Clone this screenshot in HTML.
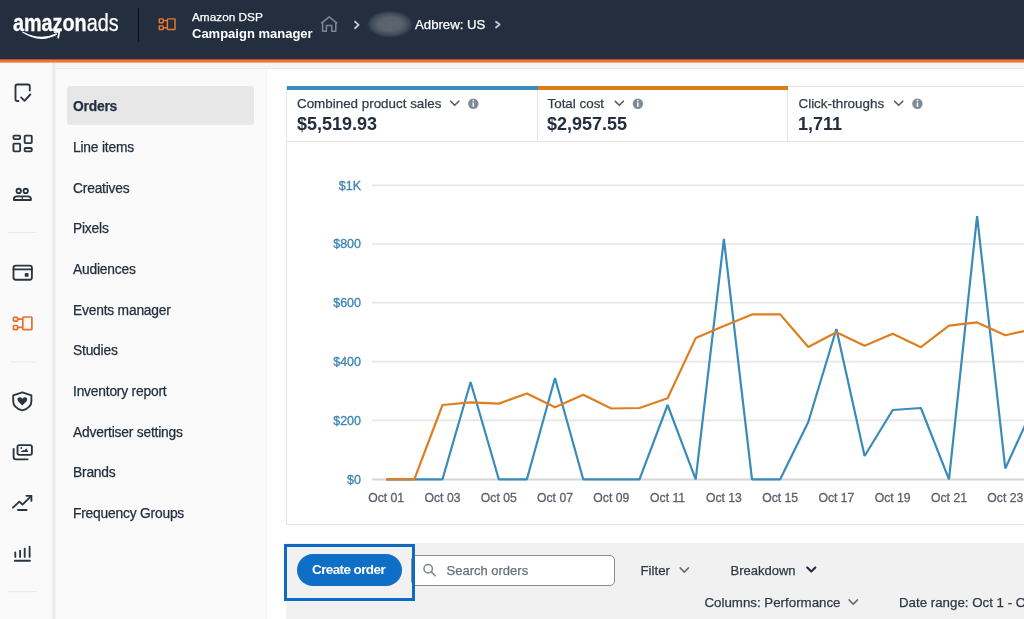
<!DOCTYPE html>
<html><head><meta charset="utf-8">
<style>
*{margin:0;padding:0;box-sizing:border-box}
html,body{width:1024px;height:619px;overflow:hidden;will-change:transform;background:#fff;font-family:"Liberation Sans",sans-serif;color:#232f3e}
.abs{position:absolute}
#hdr{left:0;top:0;width:1024px;height:59px;background:#232f3e}
#hline{left:0;top:59px;width:1024px;height:4px;background:linear-gradient(#5a3022 0,#ec7030 22%,#ee7838 70%,#f6c2a6 100%)}
#rail{left:0;top:63px;width:53px;height:557px;background:#fafafa}
#railb{left:52px;top:63px;width:4px;height:556px;background:linear-gradient(90deg,#f3f3f3,#e8e8e8 40%,#ececec 60%,#f6f6f6)}
#nav{left:56px;top:69px;width:211px;height:550px;background:#fafafa;border-right:1px solid #f2f2f2}
#band{left:56px;top:63px;width:968px;height:6px;background:linear-gradient(#f6f6f6,#f3f4f4);border-bottom:1px solid #e8e9e9}
.nv{position:absolute;-webkit-text-stroke:0.25px currentColor;left:73px;font-size:13.8px;letter-spacing:-0.2px;color:#232f3e;white-space:nowrap;line-height:16px}
#sel{left:67px;top:86px;width:187px;height:39px;background:#e7e7e8;border-radius:3px}
.t{position:absolute;white-space:nowrap;-webkit-text-stroke:0.25px currentColor}
.yl{font-size:12.5px;fill:#3a84b3;stroke:#3a84b3;stroke-width:0.3px;font-family:"Liberation Sans",sans-serif}
.xl{font-size:12.2px;fill:#5b626b;stroke:#5b626b;stroke-width:0.3px;font-family:"Liberation Sans",sans-serif}
</style></head><body>
<div id="hdr" class="abs"></div>
<div id="hline" class="abs"></div>
<!-- logo -->
<div class="t" style="left:12.5px;top:8.6px;font-size:23px;color:#fff;line-height:28px;transform-origin:0 0;transform:scaleX(0.86)"><b style="-webkit-text-stroke:0.3px #fff">amazon</b>ads</div>
<div class="abs" style="left:138px;top:8px;width:1px;height:34px;background:#0c1117"></div>
<div class="t" style="left:192px;top:10.2px;font-size:11.8px;color:#fff;line-height:14px">Amazon DSP</div>
<div class="t" style="left:192px;top:26.2px;font-size:13px;color:#fff;font-weight:bold;-webkit-text-stroke:0;line-height:16px">Campaign manager</div>
<div class="t" style="left:415px;top:17px;font-size:13.2px;color:#fff;line-height:16px">Adbrew: US</div>

<div id="rail" class="abs"></div>
<div id="railb" class="abs"></div>
<div id="band" class="abs"></div>
<div id="nav" class="abs"></div>
<div id="sel" class="abs"></div>
<div class="nv" style="top:99px;font-weight:bold">Orders</div>
<div class="nv" style="top:140px">Line items</div>
<div class="nv" style="top:181px">Creatives</div>
<div class="nv" style="top:221px">Pixels</div>
<div class="nv" style="top:262px">Audiences</div>
<div class="nv" style="top:303px">Events manager</div>
<div class="nv" style="top:343px">Studies</div>
<div class="nv" style="top:384px">Inventory report</div>
<div class="nv" style="top:425px">Advertiser settings</div>
<div class="nv" style="top:465px">Brands</div>
<div class="nv" style="top:506px">Frequency Groups</div>

<!-- chart card -->
<div class="abs" style="left:286px;top:86px;width:760px;height:439px;border:1px solid #e4e4e4;background:#fff"></div>
<div class="abs" style="left:287px;top:86.4px;width:250.5px;height:3.4px;background:#3a8bb9"></div>
<div class="abs" style="left:538px;top:86.4px;width:250px;height:3.4px;background:#dc7d1c"></div>
<div class="abs" style="left:537px;top:90px;width:1px;height:51px;background:#e4e4e4"></div>
<div class="abs" style="left:787px;top:90px;width:1px;height:51px;background:#e4e4e4"></div>
<div class="abs" style="left:287px;top:141px;width:737px;height:1px;background:#e4e4e4"></div>
<div class="t" style="left:297px;top:96px;font-size:13.4px;color:#333c48;line-height:16px">Combined product sales</div>
<div class="t" style="left:297px;top:114px;font-size:18px;font-weight:bold;-webkit-text-stroke:0;line-height:20px">$5,519.93</div>
<div class="t" style="left:547.5px;top:96px;font-size:13.4px;color:#333c48;line-height:16px">Total cost</div>
<div class="t" style="left:547px;top:114px;font-size:18px;font-weight:bold;-webkit-text-stroke:0;line-height:20px">$2,957.55</div>
<div class="t" style="left:798.5px;top:96px;font-size:13.4px;color:#333c48;line-height:16px">Click-throughs</div>
<div class="t" style="left:798px;top:114px;font-size:18px;font-weight:bold;-webkit-text-stroke:0;line-height:20px">1,711</div>

<svg class="abs" style="left:0;top:0" width="1024" height="619">
<line x1="372" y1="185.2" x2="1024" y2="185.2" stroke="#e6e6e6" stroke-width="1.6"/>
<text x="361" y="189.5" text-anchor="end" class="yl">$1K</text>
<line x1="372" y1="244" x2="1024" y2="244" stroke="#e6e6e6" stroke-width="1.6"/>
<text x="361" y="248.3" text-anchor="end" class="yl">$800</text>
<line x1="372" y1="302.8" x2="1024" y2="302.8" stroke="#e6e6e6" stroke-width="1.6"/>
<text x="361" y="307.1" text-anchor="end" class="yl">$600</text>
<line x1="372" y1="361.6" x2="1024" y2="361.6" stroke="#e6e6e6" stroke-width="1.6"/>
<text x="361" y="365.9" text-anchor="end" class="yl">$400</text>
<line x1="372" y1="420.4" x2="1024" y2="420.4" stroke="#e6e6e6" stroke-width="1.6"/>
<text x="361" y="424.7" text-anchor="end" class="yl">$200</text>
<line x1="372" y1="479.5" x2="1024" y2="479.5" stroke="#d6d6d6" stroke-width="2"/>
<text x="361" y="483.8" text-anchor="end" class="yl">$0</text>
<text x="386.2" y="501.5" text-anchor="middle" class="xl">Oct 01</text>
<text x="442.5" y="501.5" text-anchor="middle" class="xl">Oct 03</text>
<text x="498.8" y="501.5" text-anchor="middle" class="xl">Oct 05</text>
<text x="555.0" y="501.5" text-anchor="middle" class="xl">Oct 07</text>
<text x="611.3" y="501.5" text-anchor="middle" class="xl">Oct 09</text>
<text x="667.6" y="501.5" text-anchor="middle" class="xl">Oct 11</text>
<text x="723.9" y="501.5" text-anchor="middle" class="xl">Oct 13</text>
<text x="780.2" y="501.5" text-anchor="middle" class="xl">Oct 15</text>
<text x="836.4" y="501.5" text-anchor="middle" class="xl">Oct 17</text>
<text x="892.7" y="501.5" text-anchor="middle" class="xl">Oct 19</text>
<text x="949.0" y="501.5" text-anchor="middle" class="xl">Oct 21</text>
<text x="1005.3" y="501.5" text-anchor="middle" class="xl">Oct 23</text>
<polyline points="386.2,479.3 414.3,479.3 442.5,479.3 470.6,382.0 498.8,479.3 526.9,479.3 555.0,378.0 583.2,479.3 611.3,479.3 639.5,479.3 667.6,405.0 695.7,479.3 723.9,239.0 752.0,479.3 780.2,479.3 808.3,422.0 836.4,329.0 864.6,456.0 892.7,410.0 920.9,408.0 949.0,479.3 977.1,216.0 1005.3,468.5 1033.4,407.0" fill="none" stroke="#3a8bb9" stroke-width="2.2" stroke-linejoin="bevel"/>
<polyline points="386.2,479.3 414.3,479.3 442.5,405.0 470.6,402.4 498.8,403.6 526.9,393.5 555.0,407.3 583.2,394.7 611.3,408.5 639.5,408.0 667.6,398.3 695.7,338.1 723.9,326.1 752.0,314.4 780.2,314.4 808.3,347.0 836.4,332.2 864.6,345.7 892.7,333.8 920.9,347.2 949.0,325.6 977.1,322.4 1005.3,335.3 1033.4,329.0" fill="none" stroke="#dd7f20" stroke-width="2.2" stroke-linejoin="bevel"/>
</svg>

<svg class="abs" style="left:0;top:0" width="1024" height="619">
<g fill="none" stroke="#ee7a2f" stroke-width="1.4">
<rect x="159.3" y="18.9" width="3.9" height="3.9" rx="0.6"/>
<rect x="159.3" y="25.9" width="3.9" height="3.6" rx="0.6"/>
<rect x="167.4" y="18.9" width="7.6" height="10.6" rx="0.6"/>
<path d="M163.2 20.6H167.4M163.2 27.8H167.4"/>
</g>
<g fill="none" stroke="#7e8893" stroke-width="1.5" stroke-linejoin="round">
<path d="M321.2 23.4L329.2 16.9L337.2 23.4M322.6 22.4V31.2H326.4V25.6H331.7V31.2H335.8V22.4"/>
</g>
<g fill="none" stroke="#c4c9cf" stroke-width="1.9" stroke-linecap="round" stroke-linejoin="round">
<path d="M355 21.6L358.6 24.9L355 28.2"/>
<path d="M496 21.8L499.6 24.6L496 27.4"/>
</g>
<ellipse cx="390" cy="24.2" rx="23.5" ry="13.5" fill="url(#blur)"/>
<defs><radialGradient id="blur"><stop offset="0" stop-color="#5d6570"/><stop offset="0.5" stop-color="#58616c"/><stop offset="0.8" stop-color="#404a57"/><stop offset="1" stop-color="#232f3e"/></radialGradient></defs>
<path d="M22 32.3Q40 44.5 57.2 34.6L56.5 33.3Q40 41.2 22.8 31.4Z" fill="#fff"/>
<path d="M54.6 32.2L59.4 31.7L58.2 37.6" fill="none" stroke="#fff" stroke-width="1.7" stroke-linecap="round" stroke-linejoin="round"/>

<g fill="none" stroke="#2a3440" stroke-width="1.85" stroke-linecap="round" stroke-linejoin="round">
<path d="M18.4 101H17.3Q15.5 101 15.5 99.2V86.3Q15.5 84.5 17.3 84.5H28Q29.8 84.5 29.8 86.3V90.6"/>
<path d="M21.1 97.4L24.5 100.8L30.3 94.5"/>
<rect x="13.45" y="135.55" width="6.7" height="3.6" rx="0.9"/>
<rect x="24.65" y="135.55" width="7.1" height="7.6" rx="0.9"/>
<rect x="13.45" y="143.55" width="6.7" height="7.8" rx="0.9"/>
<rect x="24.65" y="147.95" width="7.1" height="3.4" rx="0.9"/>
<circle cx="18.7" cy="190.9" r="2.2"/>
<circle cx="25.7" cy="190.9" r="2.2"/>
<path d="M13.9 200V199Q13.9 196.3 16.8 196.3H28Q30.9 196.3 30.9 199V200Z"/>
<path d="M22.3 196.6V199.6" stroke-width="1.2"/>
<rect x="13.5" y="265.6" width="18.4" height="14.1" rx="2.2"/>
<path d="M13.5 269.4H31.9"/>
</g>
<rect x="24.8" y="273.1" width="3.7" height="3.6" fill="#2a3440"/>
<g fill="none" stroke="#e8702a" stroke-width="1.7">
<rect x="13.4" y="317.3" width="4.2" height="3.9" rx="0.8"/>
<rect x="13.4" y="325.5" width="4.2" height="4.2" rx="0.8"/>
<rect x="22.8" y="317" width="9.1" height="12.7" rx="0.8"/>
<path d="M17.6 319.1H22.8M17.6 327.4H22.8"/>
</g>
<g fill="none" stroke="#2a3440" stroke-width="1.85" stroke-linecap="round" stroke-linejoin="round">
<path d="M22.3 392.4L13.2 395.3V401.2C13.2 405.8 17 408.9 22.3 410.4C27.6 408.9 31.4 405.8 31.4 401.2V395.3Z"/>
<rect x="17.5" y="445.1" width="14.4" height="9.8" rx="1.8"/>
<path d="M13.6 448.8V457Q13.6 459.3 15.9 459.3H27.6"/>
<path d="M12.9 507.6L19.4 501.6L22.5 504.7L31.1 496.1"/>
<path d="M26.4 495.8H31.4V500.9"/>
<path d="M18 510H26.6"/>
<path d="M15.3 552.5V556.9M20.1 550.6V556.9M24.7 548.6V556.9M29.6 546.7V556.9"/>
<path d="M14.9 560.8H29.9" stroke-width="2"/>
</g>
<path d="M22.3 405.4L18.1 401.3Q16.8 399.6 17.8 398.1Q19.2 396.6 21 397.6L22.3 398.7L23.6 397.6Q25.4 396.6 26.8 398.1Q27.8 399.6 26.5 401.3Z" fill="#2a3440"/>
<circle cx="21.3" cy="448" r="0.9" fill="#2a3440"/>
<path d="M20.4 452H28.2L26.4 448.3L24.6 450.6L23.4 450Z" fill="#2a3440"/>
<path d="M8 232.5H36M10.5 362H35.6M8 591.7H37" stroke="#e9e9e9" stroke-width="1"/>
</svg>

<svg class="abs" style="left:0;top:0" width="1024" height="619">
<g fill="none" stroke="#545b64" stroke-width="1.6" stroke-linecap="round" stroke-linejoin="round">
<path d="M450.6 101.2L454.7 105.3L458.8 101.2"/>
<path d="M615.2 101.2L619.3 105.3L623.4 101.2"/>
<path d="M894.6 101.2L898.7 105.3L902.8 101.2"/>
</g>
<g fill="#7f8a97"><circle cx="473.3" cy="103.7" r="5.2"/><circle cx="637.9" cy="103.7" r="5.2"/><circle cx="917.4" cy="103.7" r="5.2"/></g>
<g stroke="#fff" stroke-width="1.5"><path d="M473.3 102.4V106.8M637.9 102.4V106.8M917.4 102.4V106.8"/></g>
<g fill="#fff"><circle cx="473.3" cy="100.6" r="0.85"/><circle cx="637.9" cy="100.6" r="0.85"/><circle cx="917.4" cy="100.6" r="0.85"/></g>
</svg>
<!-- toolbar -->
<div class="abs" style="left:286px;top:543px;width:738px;height:76px;background:#f1f1f1"></div>
<div class="abs" style="left:297px;top:554px;width:105px;height:32px;border-radius:16px;background:#0f6fc6"></div>
<div class="t" style="left:312px;top:562px;font-size:13.5px;letter-spacing:-0.6px;font-weight:bold;-webkit-text-stroke:0;color:#fff;line-height:16px">Create order</div>
<div class="abs" style="left:411px;top:554.5px;width:204px;height:31.5px;border:1px solid #8d8d8d;border-radius:5px;background:#fff"></div>
<div class="abs" style="left:284px;top:544px;width:131px;height:57px;border:3px solid #0d6bc4"></div>
<div class="t" style="left:446.5px;top:563px;font-size:13px;color:#687078;line-height:16px">Search orders</div>
<div class="t" style="left:640.5px;top:563px;font-size:13.3px;color:#2f3945;line-height:16px">Filter</div>
<div class="t" style="left:730.5px;top:563px;font-size:13px;color:#2f3945;line-height:16px">Breakdown</div>
<div class="t" style="left:704.5px;top:595px;font-size:13.3px;color:#2f3945;line-height:16px">Columns: Performance</div>
<div class="t" style="left:899px;top:595px;font-size:13.3px;color:#2f3945;line-height:16px">Date range: Oct 1 - Oct 31</div>
<svg class="abs" style="left:0;top:0" width="1024" height="619">
<g fill="none" stroke="#7d8590" stroke-width="1.5" stroke-linecap="round"><circle cx="428.2" cy="568.8" r="4.2"/><path d="M431.3 571.9L435.2 575.8"/></g>
<g fill="none" stroke="#5f6b7a" stroke-width="1.5" stroke-linecap="round" stroke-linejoin="round">
<path d="M680.1 567.9L684.3 572.1L688.5 567.9"/>
<path d="M849.1 599.9L853.3 604.1L857.5 599.9"/>
</g>
<path d="M807.2 567.4L811.3 571.5L815.4 567.4" fill="none" stroke="#232f3e" stroke-width="2.1" stroke-linecap="round" stroke-linejoin="round"/>
</svg>
</body></html>
